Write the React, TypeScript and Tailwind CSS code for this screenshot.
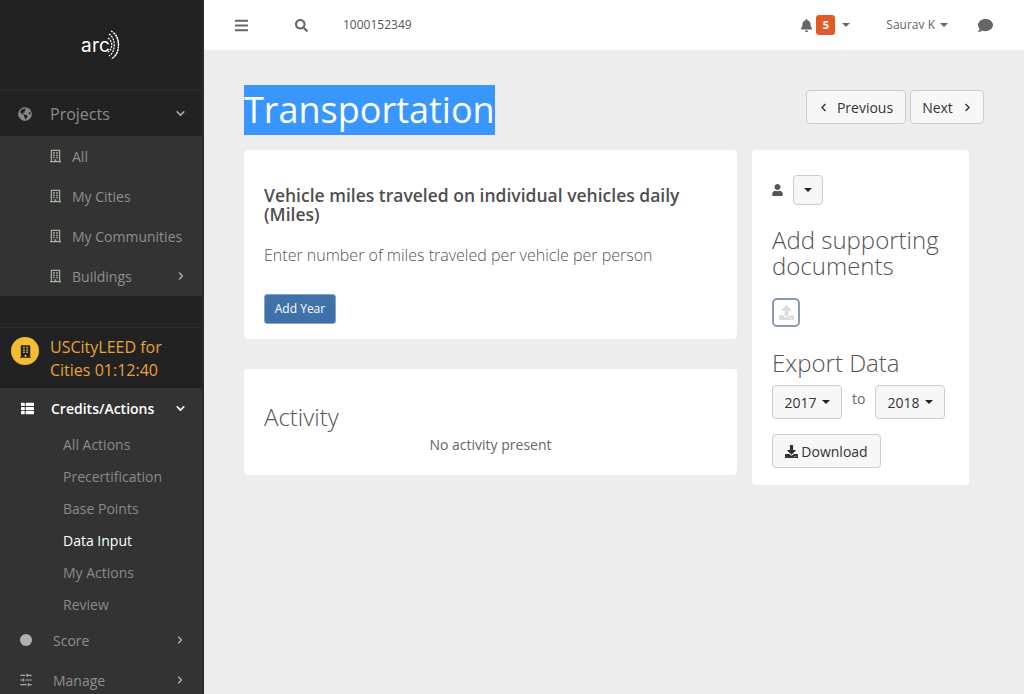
import React from "react";
import { FaBars, FaBell, FaBuilding, FaChevronLeft, FaChevronRight, FaComment, FaDownload, FaGlobeAmericas, FaRegBuilding, FaSearch, FaThList, FaUpload, FaUser } from "react-icons/fa";
import { LuChevronDown, LuChevronRight, LuSlidersHorizontal } from "react-icons/lu";

const Caret = ({ className = "" }: { className?: string }) => (
  <span className={`inline-block w-0 h-0 border-x-[4px] border-x-transparent border-t-[4px] ${className}`} />
);

const ArcLogo = () => (
  <div className="flex items-center">
    <span className="text-white text-[19px] leading-none tracking-[0.2px] font-['Inter',sans-serif]">arc</span>
    <svg width="14" height="30" viewBox="0 0 14 30" fill="none" stroke="white" strokeWidth="1.3" className="-ml-[3px]">
      <path d="M2 4 C9 8 9 22 2 26" strokeDasharray="2 1" />
      <path d="M4 1 C14 6 14 24 4 29" strokeDasharray="2 1" />
      <path d="M1 8 C6 11 6 19 1 22" strokeDasharray="2 1" />
      <path d="M7 3 C13 8 13 22 7 27" strokeDasharray="1.5 1" />
    </svg>
  </div>
);

const SubItem = ({ label }: { label: string }) => (
  <div className="h-10 flex items-center pl-[50px] pr-4 text-[14px] text-[#8f8f8f]">
    <FaRegBuilding className="w-[11px] h-[14px] text-[#a9b5a5] shrink-0" />
    <span className="ml-[11px]">{label}</span>
    {label === "Buildings" && <LuChevronRight className="ml-auto -mr-[1px] w-3 h-3 text-[#aaa]" strokeWidth={3} />}
  </div>
);

const ActionItem = ({ label, active }: { label: string; active?: boolean }) => (
  <div className={`h-8 flex items-center pl-[63px] text-[14px] ${active ? "text-white" : "text-[#8a8a8a]"}`}>{label}</div>
);

const Btn = ({ children, className = "" }: { children: React.ReactNode; className?: string }) => (
  <button className={`flex items-center justify-center rounded border border-[#ccc] bg-[#f7f7f7] text-[#333] text-[14px] ${className}`}>{children}</button>
);

export default function App() {
  return (
    <div className="flex h-[694px] w-[1024px] overflow-hidden bg-[#ededed] font-['Open_Sans',sans-serif]">
      <aside className="w-[204px] shrink-0 h-full bg-[#333] border-r-2 border-[#2a2a2a] flex flex-col overflow-hidden">
        <div className="h-[91px] shrink-0 bg-[#222] border-b border-[#2e2e2e] flex items-center justify-center">
          <ArcLogo />
        </div>
        <div className="h-[45px] shrink-0 bg-[#222] flex items-center pl-[18px] pr-[15px] text-[16px] text-[#8b8b8b]">
          <FaGlobeAmericas className="w-[14px] h-[14px] text-[#858a8d]" />
          <span className="ml-[18px]">Projects</span>
          <LuChevronDown className="ml-auto w-[13px] h-[13px] text-[#aaa]" strokeWidth={3} />
        </div>
        <div className="shrink-0 bg-[#333]">
          <SubItem label="All" />
          <SubItem label="My Cities" />
          <SubItem label="My Communities" />
          <SubItem label="Buildings" />
        </div>
        <div className="h-[32px] shrink-0 bg-[#222] border-b border-[#2e2e2e]" />
        <div className="h-[60px] shrink-0 bg-[#222] flex pl-[11px] pt-[8px]">
          <div className="w-[28px] h-[28px] rounded-full bg-[#f4bc33] flex items-center justify-center shrink-0 mt-[1px]">
            <FaBuilding className="w-[11px] h-[15px] text-[#222]" />
          </div>
          <div className="ml-[11px] text-[16px] leading-[23px] text-[#e8a33a]">USCityLEED for Cities 01:12:40</div>
        </div>
        <div className="h-10 shrink-0 flex items-center pl-[20px] pr-[15px] text-[14px] font-semibold text-white">
          <FaThList className="w-[15px] h-[13px] text-white" />
          <span className="ml-[16px]">Credits/Actions</span>
          <LuChevronDown className="ml-auto w-[13px] h-[13px] text-white" strokeWidth={3} />
        </div>
        <div className="shrink-0">
          <ActionItem label="All Actions" />
          <ActionItem label="Precertification" />
          <ActionItem label="Base Points" />
          <ActionItem label="Data Input" active />
          <ActionItem label="My Actions" />
          <ActionItem label="Review" />
        </div>
        <div className="h-10 shrink-0 flex items-center pl-[20px] pr-[16px] text-[14px] text-[#8f8f8f]">
          <span className="w-[12px] h-[12px] rounded-full bg-[#b0b0b0]" />
          <span className="ml-[21px]">Score</span>
          <LuChevronRight className="ml-auto w-3 h-3 text-[#aaa]" strokeWidth={3} />
        </div>
        <div className="h-10 shrink-0 flex items-center pl-[19px] pr-[16px] text-[14px] text-[#8f8f8f]">
          <LuSlidersHorizontal className="w-[14px] h-[14px] text-[#aaa]" />
          <span className="ml-[20px]">Manage</span>
          <LuChevronRight className="ml-auto w-3 h-3 text-[#aaa]" strokeWidth={3} />
        </div>
      </aside>

      <div className="flex-1 flex flex-col min-w-0">
        <header className="h-[50px] shrink-0 bg-white flex items-center text-[#666]">
          <FaBars className="ml-[30px] w-[15px] h-[15px] text-[#666]" />
          <FaSearch className="ml-[46px] w-[13px] h-[13px] text-[#666]" />
          <span className="ml-[35px] text-[12px] text-[#555]">1000152349</span>
          <div className="ml-auto flex items-center">
            <FaBell className="w-[13px] h-[13px] text-[#666]" />
            <span className="ml-[3px] w-[19px] h-[20px] rounded-[3px] bg-[#e25a26] text-white text-[11px] font-bold flex items-center justify-center">5</span>
            <Caret className="ml-[7px] border-t-[#666]" />
            <span className="ml-[36px] text-[12px] text-[#666]">Saurav K</span>
            <Caret className="ml-[5px] border-t-[#666]" />
            <FaComment className="ml-[29px] mr-[30px] w-[17px] h-[15px] text-[#666]" />
          </div>
        </header>

        <main className="flex-1 pl-[40px] pr-[40px] pt-[35px] min-h-0">
          <div className="flex items-start justify-between h-[65px]">
            <h1 className="h-[50px] bg-[#3996ff] text-white text-[36px] leading-[50px] font-normal">Transportation</h1>
            <div className="flex gap-[4px] mt-[5px]">
              <Btn className="w-[100px] h-[34px]">
                <FaChevronLeft className="w-[9px] h-[9px] mr-[9px]" />
                <span>Previous</span>
              </Btn>
              <Btn className="w-[74px] h-[34px]">
                <span>Next</span>
                <FaChevronRight className="w-[9px] h-[9px] ml-[10px]" />
              </Btn>
            </div>
          </div>

          <div className="flex items-start gap-[15px]">
            <div className="w-[493px] shrink-0 flex flex-col gap-[30px]">
              <section className="h-[189px] bg-white rounded px-[20px] pt-[36px]">
                <h2 className="text-[17.5px] leading-[19px] font-semibold text-[#4f4f4f]">Vehicle miles traveled on individual vehicles daily (Miles)</h2>
                <p className="mt-[20px] text-[16px] leading-[22px] font-light text-[#555]">Enter number of miles traveled per vehicle per person</p>
                <button className="mt-[28px] w-[72px] h-[30px] rounded-[3px] bg-[#3f72a8] border border-[#8aa5c2] text-white text-[12px] flex items-center justify-center">Add Year</button>
              </section>
              <section className="h-[106px] bg-white rounded px-[20px] pt-[33px]">
                <h3 className="text-[24px] leading-[30px] font-light text-[#555]">Activity</h3>
                <p className="mt-[3px] text-center text-[14px] leading-[20px] text-[#666]">No activity present</p>
              </section>
            </div>

            <section className="w-[217px] h-[335px] shrink-0 bg-white rounded px-[20px] pt-[25px]">
              <div className="flex items-center">
                <FaUser className="w-[11px] h-[12px] text-[#555]" />
                <Btn className="ml-[10px] w-[30px] h-[30px]"><Caret className="border-t-[#222]" /></Btn>
              </div>
              <h3 className="mt-[22px] text-[24px] leading-[26px] font-light text-[#555]">Add supporting documents</h3>
              <div className="mt-[19px] w-[28px] h-[29px] rounded-[5px] border-2 border-[#8c9bb0] flex items-center justify-center">
                <FaUpload className="w-[15px] h-[15px] text-[#dcdcdc]" />
              </div>
              <h3 className="mt-[21px] text-[24px] leading-[30px] font-light text-[#555]">Export Data</h3>
              <div className="mt-[7px] flex items-start">
                <Btn className="w-[70px] h-[34px]">2017<Caret className="ml-[5px] border-t-[#222]" /></Btn>
                <span className="ml-[10px] mt-[3px] w-[23px] text-[14px] text-[#666]">to</span>
                <Btn className="ml-[0px] w-[70px] h-[34px]">2018<Caret className="ml-[5px] border-t-[#222]" /></Btn>
              </div>
              <Btn className="mt-[15px] w-[109px] h-[34px]"><FaDownload className="w-[13px] h-[13px] mr-[3px]" />Download</Btn>
            </section>
          </div>
        </main>
      </div>
    </div>
  );
}
